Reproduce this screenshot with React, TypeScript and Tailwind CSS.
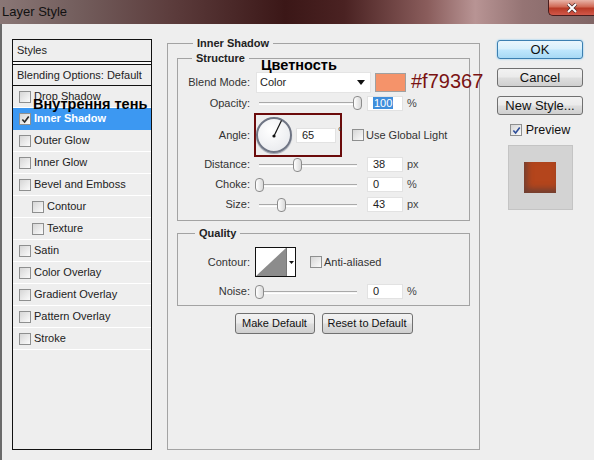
import type { ReactNode } from "react";

type Row = { label: string; checked?: boolean; active?: boolean; indent?: boolean };

const styleRows: Row[] = [
  { label: "Drop Shadow" },
  { label: "Inner Shadow", checked: true, active: true },
  { label: "Outer Glow" },
  { label: "Inner Glow" },
  { label: "Bevel and Emboss" },
  { label: "Contour", indent: true },
  { label: "Texture", indent: true },
  { label: "Satin" },
  { label: "Color Overlay" },
  { label: "Gradient Overlay" },
  { label: "Pattern Overlay" },
  { label: "Stroke" },
];

function Check({ checked, blue }: { checked?: boolean; blue?: boolean }) {
  return (
    <span className="relative inline-flex w-[12px] h-[12px] shrink-0 border border-[#8e8f8f] bg-[linear-gradient(135deg,#d6d6d6,#fbfbfb)]">
      {checked && (
        <svg viewBox="0 0 10 10" className="absolute left-[1px] top-[1px] w-[9px] h-[9px]">
          <path
            d="M1.5 5 L4 7.8 L8.6 1.6"
            fill="none"
            stroke={blue ? "#2f4f9a" : "#2b2b2b"}
            strokeWidth="1.8"
          />
        </svg>
      )}
    </span>
  );
}

function Slider({ value }: { value: number }) {
  // thumb travels 98px along the groove
  return (
    <div className="relative w-[107px] h-[16px] shrink-0">
      <div className="absolute left-[4px] right-[5px] top-[7px] h-[3px] border-t border-[#a9a9a9] bg-[#f6f6f6] border-b border-b-[#ffffff]" />
      <div
        className="absolute top-[1px] w-[9px] h-[14px] rounded-[4px] border border-[#8c8c8c] bg-[linear-gradient(90deg,#ffffff,#d9d9d9)]"
        style={{ left: Math.round(value * 98) }}
      />
    </div>
  );
}

function NumBox({ children, w = "w-[36px]" }: { children: ReactNode; w?: string }) {
  return (
    <div className={`${w} h-[15px] shrink-0 bg-white border border-[#e2e2e2] flex items-center pl-[5px] text-[11px] text-[#222]`}>
      {children}
    </div>
  );
}

function Label({ children }: { children: ReactNode }) {
  return <div className="w-[73px] shrink-0 text-right text-[11px] text-[#333] pr-[1px]">{children}</div>;
}

function SliderRow({ label, value, num, unit }: { label: string; value: number; num: string; unit: string }) {
  return (
    <div className="flex items-center h-[15px]">
      <Label>{label}</Label>
      <div className="ml-[4px]">
        <Slider value={value} />
      </div>
      <div className="ml-[5px]">
        <NumBox>{num}</NumBox>
      </div>
      <span className="ml-[4px] text-[11px] text-[#444]">{unit}</span>
    </div>
  );
}

function PsButton({ children, w, primary }: { children: ReactNode; w: string; primary?: boolean }) {
  return (
    <div
      className={`${w} flex items-center justify-center rounded-[3px] border text-[#111] ${
        primary
          ? "border-[#3c7fb1] bg-[linear-gradient(180deg,#eaf6fd_0%,#d9f0fc_45%,#bee6fd_55%,#a7d9f5_100%)] shadow-[0_0_2px_#6cc3f5]"
          : "border-[#707070] bg-[linear-gradient(180deg,#f2f2f2_0%,#ebebeb_45%,#dddddd_55%,#cfcfcf_100%)]"
      }`}
    >
      {children}
    </div>
  );
}

export default function App() {
  return (
    <div className="relative w-[594px] h-[460px] overflow-hidden bg-[#eeeeee] flex flex-col font-['Liberation_Sans',Arial,sans-serif]">
      {/* title bar */}
      <div className="h-[24px] shrink-0 flex items-start justify-between bg-[linear-gradient(90deg,#8a7776_0%,#75605f_12%,#5a3a3a_30%,#3b1717_48%,#4a2222_58%,#8a5d5c_72%,#b89494_80%,#957474_88%,#806565_100%)]">
        <span className="ml-[2px] mt-[4px] text-[13px] leading-[15px] text-[#111]">Layer Style</span>
        <div className="w-[46px] h-[16px] rounded-bl-[5px] border-l border-b border-[#4a1d1d] bg-[linear-gradient(180deg,#e8b4a8_0%,#d06a56_45%,#b83a26_55%,#d2584a_100%)] flex items-center justify-center">
          <svg viewBox="0 0 12 10" className="w-[12px] h-[10px]">
            <path d="M2 1 L10 9 M10 1 L2 9" stroke="#4a2a2a" strokeWidth="3.4" />
            <path d="M2 1 L10 9 M10 1 L2 9" stroke="#ffffff" strokeWidth="2" />
          </svg>
        </div>
      </div>

      {/* dialog body */}
      <div className="flex flex-1 items-start border-l-2 border-[#6a6a6a] pl-[10px]">
        {/* styles list */}
        <div className="mt-[15px] w-[140px] h-[411px] shrink-0 border border-[#111] text-[11px] text-[#222]">
          <div className="h-[21px] flex items-center pl-[4px]">Styles</div>
          <div className="h-[4px] border-y border-[#111] bg-[#fafafa]" />
          <div className="h-[21px] flex items-center pl-[4px] border-b border-[#111]">Blending Options: Default</div>
          {styleRows.map((r) => (
            <div
              key={r.label}
              className={`h-[22px] flex items-center gap-[3px] border-b ${r.indent ? "pl-[19px]" : "pl-[6px]"} ${
                r.active ? "bg-[#3c98f2] border-[#3c98f2] text-white font-bold" : "border-white"
              }`}
            >
              <Check checked={r.checked} />
              <span>{r.label}</span>
            </div>
          ))}
        </div>

        {/* Inner Shadow group */}
        <fieldset className="mt-[12px] ml-[15px] w-[313px] h-[414px] shrink-0 border border-[#a3a3a3] px-[9px]">
          <legend className="ml-[16px] px-[4px] text-[11px] leading-[14px] font-bold text-[#222]">Inner Shadow</legend>

          <fieldset className="mt-[1px] border border-[#a3a3a3] pb-[8px]">
            <legend className="ml-[14px] px-[4px] text-[11px] leading-[14px] font-bold text-[#222]">Structure</legend>

            <div className="mt-[7px] flex items-center h-[21px]">
              <Label>Blend Mode:</Label>
              <div className="ml-[5px] w-[115px] h-[21px] bg-white border border-[#e4e4e4] flex items-center justify-between pl-[3px] pr-[5px] text-[11px] text-[#222]">
                <span>Color</span>
                <svg viewBox="0 0 8 5" className="w-[8px] h-[5px]">
                  <path d="M0 0 H8 L4 5 Z" fill="#111" />
                </svg>
              </div>
              <div className="ml-[4px] w-[31px] h-[19px] bg-[#f5936a] border border-[#a0a0a0]" />
            </div>

            <div className="mt-[2px] flex items-center h-[16px]">
              <Label>Opacity:</Label>
              <div className="ml-[4px]">
                <Slider value={1} />
              </div>
              <div className="ml-[5px]">
                <NumBox>
                  <span className="bg-[#3f8edb] text-white px-[1px] leading-[12px]">100</span>
                </NumBox>
              </div>
              <span className="ml-[4px] text-[11px] text-[#444]">%</span>
            </div>

            <div className="mt-[2px] flex items-center h-[44px]">
              <Label>Angle:</Label>
              <div className="ml-[3px] w-[88px] h-[44px] border-2 border-[#6b0b0b] flex items-center">
                <div className="relative w-[36px] h-[36px] shrink-0 rounded-full border-2 border-[#6f7584] bg-[radial-gradient(circle_at_40%_35%,#ffffff,#e4e6ea)] shadow-[0_1px_1px_#9aa0ac]">
                  <svg viewBox="0 0 32 32" className="absolute inset-0 w-full h-full">
                    <path d="M16 17 L23.5 1.5" stroke="#111" strokeWidth="1.2" />
                    <circle cx="16" cy="17" r="1.6" fill="#111" />
                  </svg>
                </div>
                <div className="ml-[4px]">
                  <NumBox w="w-[40px]">65</NumBox>
                </div>
                <span className="ml-[2px] self-start mt-[9px] text-[10px] text-[#333]">°</span>
              </div>
              <div className="ml-[10px] flex items-center gap-[2px] text-[11px] text-[#333]">
                <Check />
                <span>Use Global Light</span>
              </div>
            </div>

            <div className="mt-[0px]">
              <SliderRow label="Distance:" value={0.39} num="38" unit="px" />
            </div>
            <div className="mt-[5px]">
              <SliderRow label="Choke:" value={0} num="0" unit="%" />
            </div>
            <div className="mt-[5px]">
              <SliderRow label="Size:" value={0.22} num="43" unit="px" />
            </div>
          </fieldset>

          <fieldset className="mt-[5px] border border-[#a3a3a3] pb-[6px]">
            <legend className="ml-[17px] px-[4px] text-[11px] leading-[14px] font-bold text-[#222]">Quality</legend>

            <div className="mt-[7px] flex items-center h-[30px]">
              <Label>Contour:</Label>
              <div className="ml-[4px] w-[41px] h-[30px] flex border border-[#111] bg-white">
                <svg viewBox="0 0 30 28" preserveAspectRatio="none" className="w-[30px] h-full">
                  <path d="M0 28 L30 0 L30 28 Z" fill="#8c8c8c" />
                </svg>
                <div className="flex-1 border-l border-[#777] flex items-center justify-center">
                  <svg viewBox="0 0 5 3" className="w-[5px] h-[3px]">
                    <path d="M0 0 H5 L2.5 3 Z" fill="#111" />
                  </svg>
                </div>
              </div>
              <div className="ml-[14px] flex items-center gap-[2px] text-[11px] text-[#333]">
                <Check />
                <span>Anti-aliased</span>
              </div>
            </div>

            <div className="mt-[7px]">
              <SliderRow label="Noise:" value={0} num="0" unit="%" />
            </div>
          </fieldset>

          <div className="mt-[7px] flex justify-center gap-[7px] text-[11px]">
            <PsButton w="w-[80px] h-[21px]">Make Default</PsButton>
            <PsButton w="w-[91px] h-[21px]">Reset to Default</PsButton>
          </div>
        </fieldset>

        {/* buttons */}
        <div className="mt-[16px] ml-[17px] w-[86px] shrink-0 flex flex-col items-center text-[13px]">
          <PsButton w="w-[86px] h-[19px]" primary>
            OK
          </PsButton>
          <div className="mt-[9px]">
            <PsButton w="w-[86px] h-[19px]">Cancel</PsButton>
          </div>
          <div className="mt-[9px]">
            <PsButton w="w-[86px] h-[19px]">New Style...</PsButton>
          </div>
          <div className="mt-[6px] flex items-center gap-[4px] text-[12.5px] text-[#111]">
            <Check checked blue />
            <span>Preview</span>
          </div>
          <div className="mt-[5px] w-[65px] h-[65px] bg-[#d3d3d3] border border-[#c4c4c4] flex items-center justify-center">
            <div className="w-[32px] h-[31px] bg-[#b4451c] shadow-[inset_3px_-4px_6px_rgba(80,60,60,0.7)]" />
          </div>
        </div>
      </div>

      {/* annotations written over the screenshot */}
      <span className="absolute left-[33px] top-[96px] text-[14.5px] leading-[17px] font-bold text-black">Внутрення тень</span>
      <span className="absolute left-[261px] top-[57px] text-[14.5px] leading-[17px] font-bold text-black">Цветность</span>
      <span className="absolute left-[411px] top-[70px] text-[20px] leading-[23px] text-[#7a1313]">#f79367</span>
    </div>
  );
}
